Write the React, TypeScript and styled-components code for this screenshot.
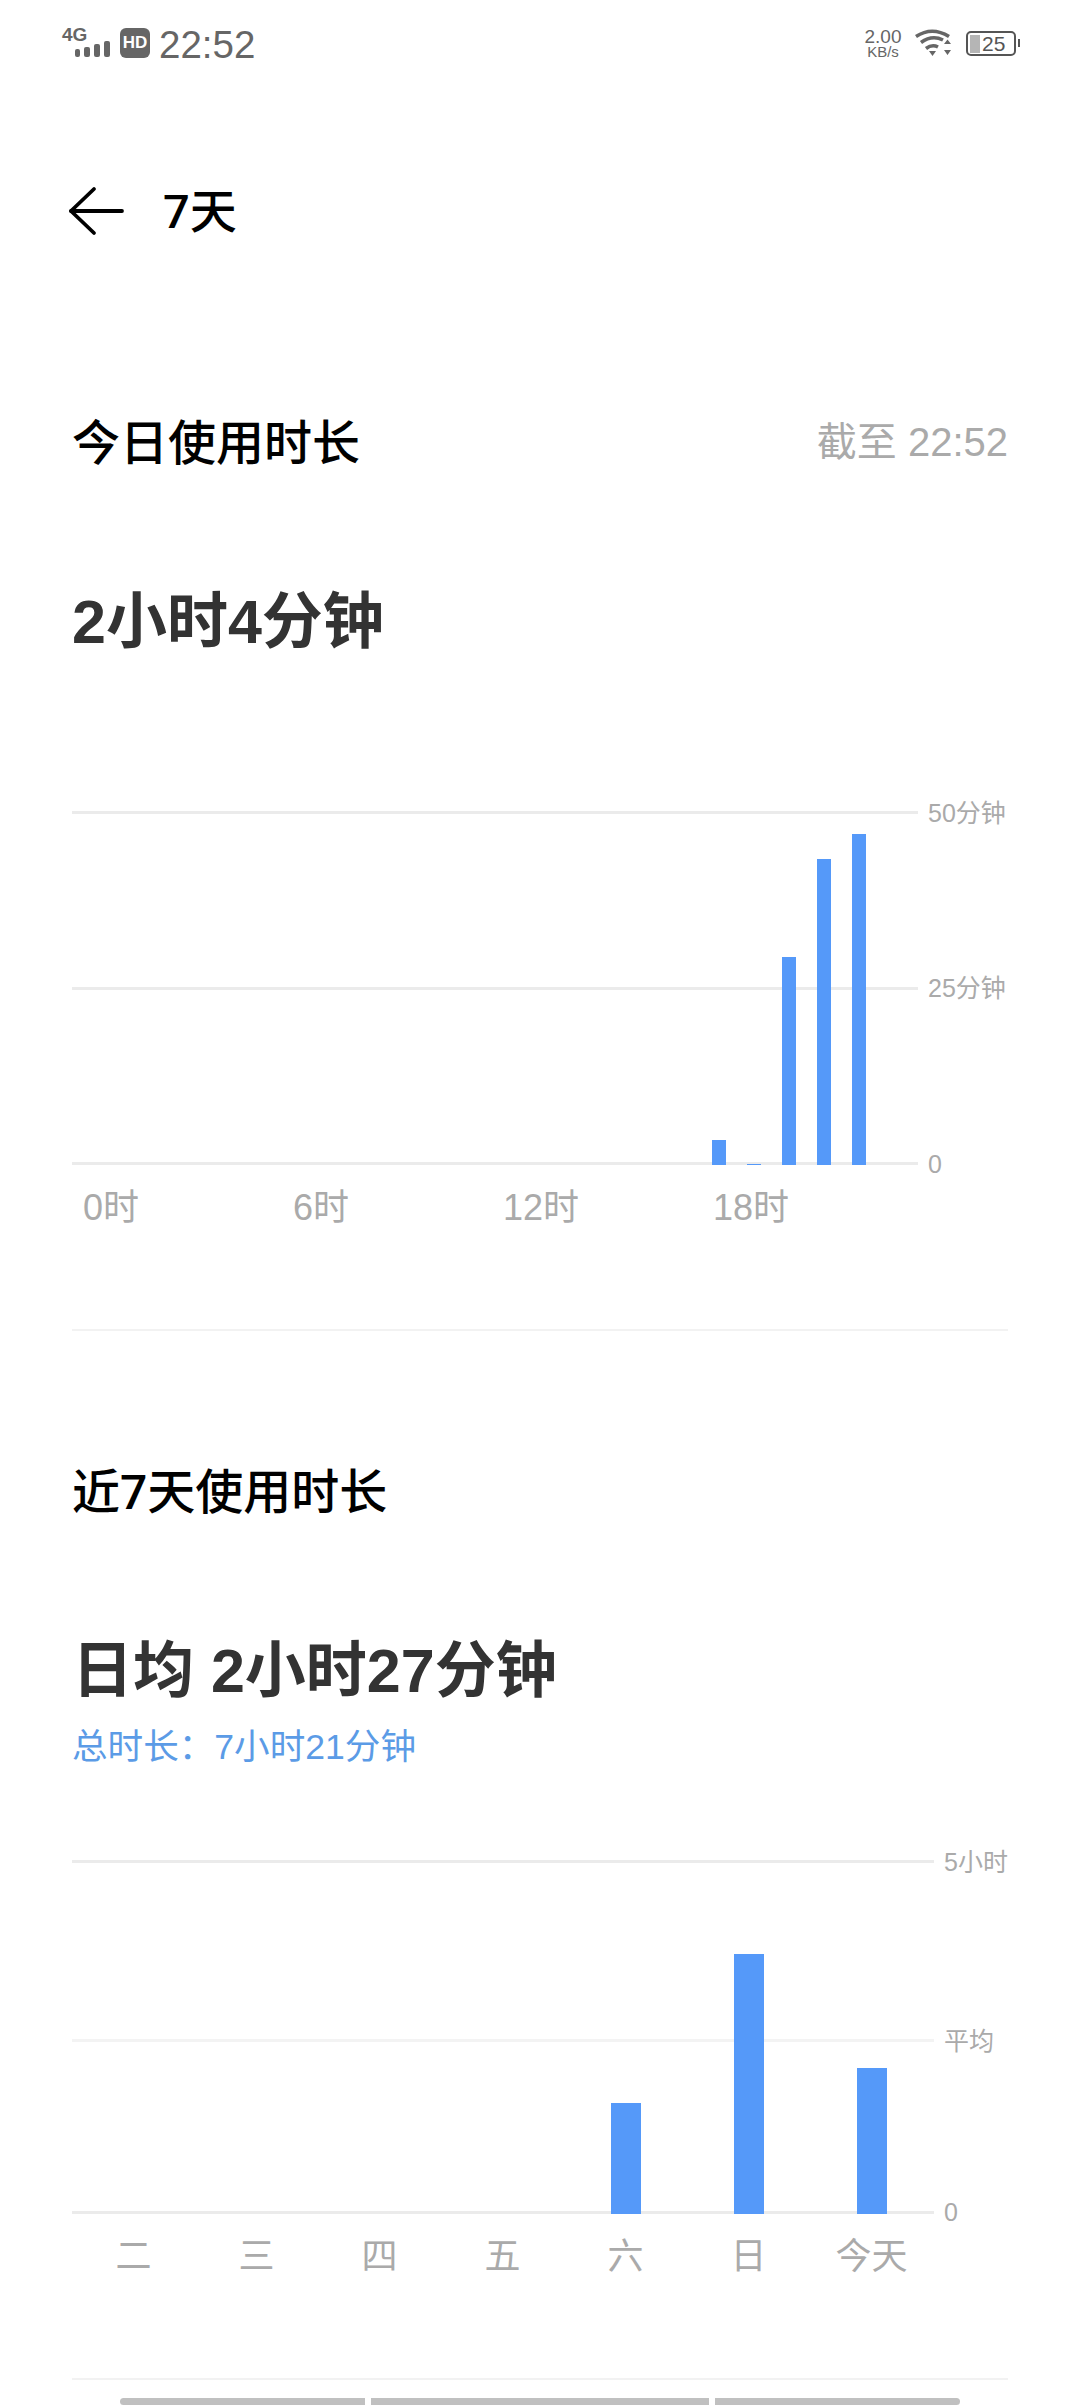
import styled, {createGlobalStyle} from "styled-components";

const GlobalStyle = createGlobalStyle`
  html, body {
    margin: 0;
    padding: 0;
    background: #fff;
  }
  body {
    font-family: "Liberation Sans", "Noto Sans CJK SC", sans-serif;
  }
`;

const Page = styled.div`
  width: 1080px;
  height: 2408px;
  overflow: hidden;
  background: #fff;
`;

const StatusBar = styled.div`
  height: 86px;
  display: flex;
  align-items: center;
  justify-content: space-between;
  padding: 0 64px 0 62px;
  color: #666;
`;

const StatusGroup = styled.div`
  display: flex;
  align-items: center;
`;

const Network = styled.div`
  width: 50px;
  height: 30px;
  display: flex;
  flex-direction: column;
  margin-right: 8px;
`;

const NetworkLabel = styled.span`
  font-size: 19px;
  line-height: 13px;
  font-weight: 700;
  height: 13px;
`;

const SignalIcon = styled.svg`
  display: block;
  margin-top: -1px;
`;

const HdBadge = styled.span`
  width: 30px;
  height: 30px;
  border-radius: 6px;
  background: #666;
  color: #fff;
  font-size: 17px;
  font-weight: 700;
  display: flex;
  align-items: center;
  justify-content: center;
  margin-right: 9px;
`;

const Clock = styled.span`
  font-size: 38.5px;
  line-height: 40px;
  margin-top: 3px;
`;

const Speed = styled.div`
  width: 40px;
  display: flex;
  flex-direction: column;
  align-items: center;
  margin-right: 11px;
`;

const SpeedValue = styled.span`
  font-size: 19px;
  line-height: 17px;
`;

const SpeedUnit = styled.span`
  font-size: 15px;
  line-height: 14px;
`;

const WifiIcon = styled.svg`
  display: block;
  margin-right: 14px;
`;

const Battery = styled.div`
  position: relative;
  width: 50px;
  height: 25px;
  box-sizing: border-box;
  border: 2px solid #555;
  border-radius: 5px;
  display: flex;
  align-items: center;
  padding-left: 2px;
  margin-top: 1px;
  &::after {
    content: "";
    position: absolute;
    right: -6px;
    top: 6px;
    width: 2px;
    height: 8px;
    background: #555;
  }
`;

const BatteryFill = styled.div`
  width: 10px;
  height: 18px;
  background: #b5b5b5;
  margin-right: 2px;
`;

const BatteryText = styled.span`
  font-size: 21px;
  line-height: 21px;
  color: #555;
`;

const Header = styled.header`
  height: 100px;
  margin-top: 74px;
  display: flex;
  align-items: center;
  padding-left: 68px;
`;

const BackIcon = styled.svg`
  display: block;
  margin: 2px 39px 0 0;
`;

const PageTitle = styled.h1`
  margin: 0 0 6px;
  font-family: Roboto, "Noto Sans CJK SC", sans-serif;
  font-size: 47px;
  font-weight: 500;
  color: #000;
`;

const Content = styled.main`
  padding: 0 72px;
`;

const SectionHead = styled.div<{$top: number}>`
  box-sizing: border-box;
  height: 80px;
  padding-bottom: 6px;
  margin-top: ${(props) => props.$top}px;
  display: flex;
  align-items: center;
  justify-content: space-between;
`;

const SectionTitle = styled.h2`
  margin: 0;
  font-family: Roboto, "Noto Sans CJK SC", sans-serif;
  font-size: 48px;
  font-weight: 500;
  color: #000;
`;

const UpdatedAt = styled.span`
  font-size: 40px;
  color: #aaa;
`;

const BigValue = styled.div`
  box-sizing: border-box;
  height: 80px;
  padding-bottom: 12px;
  margin-top: 100px;
  display: flex;
  align-items: center;
  font-size: 61px;
  font-weight: 700;
  color: #333;
`;

const TotalLine = styled.div`
  box-sizing: border-box;
  height: 50px;
  padding-bottom: 5px;
  margin-top: 10px;
  display: flex;
  align-items: center;
  font-size: 35.6px;
  color: #5b9be6;
`;

const Plot = styled.div<{$top: number}>`
  display: grid;
  height: 354px;
  margin-top: ${(props) => props.$top}px;
  & > * {
    grid-area: 1 / 1;
  }
`;

const GridLayer = styled.div`
  display: flex;
  flex-direction: column;
`;

const GridRow = styled.div`
  height: 3px;
  display: flex;
  align-items: center;
`;

const GridLine = styled.div<{$light?: boolean}>`
  flex: 1;
  height: 3px;
  background: ${(props) => (props.$light ? "#f3f3f3" : "#ebebeb")};
`;

const AxisLabel = styled.span<{$width: number}>`
  width: ${(props) => props.$width}px;
  height: 30px;
  line-height: 30px;
  margin-left: 10px;
  font-size: 25px;
  color: #aaa;
  white-space: nowrap;
  flex-shrink: 0;
`;

const BarLayer = styled.div<{$cols: number; $colWidth: number; $left: number}>`
  display: grid;
  grid-template-columns: repeat(${(props) => props.$cols}, ${(props) => props.$colWidth}px);
  padding-left: ${(props) => props.$left}px;
  align-items: end;
`;

const Bar = styled.div<{$width: number; $center?: boolean}>`
  width: ${(props) => props.$width}px;
  background: #5599f9;
  justify-self: ${(props) => (props.$center ? "center" : "start")};
`;

const XAxis = styled.div<{$cols: number; $colWidth: number; $left: number; $center?: boolean}>`
  box-sizing: border-box;
  display: grid;
  grid-template-columns: repeat(${(props) => props.$cols}, ${(props) => props.$colWidth}px);
  padding: 0 0 3px ${(props) => props.$left}px;
  height: 60px;
  margin-top: 10px;
  align-items: center;
  justify-items: ${(props) => (props.$center ? "center" : "start")};
  font-size: 36px;
  color: #aaa;
`;

const Divider = styled.div`
  height: 2px;
  margin-top: 94px;
  background: #f2f2f2;
`;

const ScrollTrack = styled.div`
  display: grid;
  grid-template-columns: 245px 338px 245px;
  column-gap: 6px;
  margin: 18px 0 0 48px;
`;

const ScrollPiece = styled.div<{$edge?: "left" | "right"}>`
  height: 7px;
  background: #c0c0c0;
  border-radius: ${(props) =>
    props.$edge === "left" ? "4px 0 0 4px" : props.$edge === "right" ? "0 4px 4px 0" : "0"};
`;

type Tick = {label: string; value: number; light?: boolean};

const PLOT_HEIGHT = 354;

const ChartGrid = ({ticks, labelWidth}: {ticks: Tick[]; labelWidth: number}) => {
  const scale = (PLOT_HEIGHT - 3) / ticks[0].value;
  return (
    <GridLayer>
      {ticks.map((t, i) => (
        <GridRow
          key={t.label}
          style={i > 0 ? {marginTop: (ticks[i - 1].value - t.value) * scale - 3} : undefined}
        >
          <GridLine $light={t.light} />
          <AxisLabel $width={labelWidth}>{t.label}</AxisLabel>
        </GridRow>
      ))}
    </GridLayer>
  );
};

// minutes per hour, 0-23
const todayMinutes = [
  0, 0, 0, 0, 0, 0, 0, 0, 0, 0, 0, 0, 0, 0, 0, 0, 0, 0, 3.5, 0.2, 29.4, 43.2, 46.8, 0,
];
const weekMinutes = [0, 0, 0, 0, 94, 220, 124];
const weekLabels = ["二", "三", "四", "五", "六", "日", "今天"];
const AVG_MINUTES = 147;

const App = () => {
  return (
    <Page>
      <GlobalStyle />
      <StatusBar>
        <StatusGroup>
          <Network>
            <NetworkLabel>4G</NetworkLabel>
            <SignalIcon width="48" height="18" viewBox="0 0 48 18" fill="#666">
              <rect x="13" y="9" width="5" height="8" rx="2" />
              <rect x="22" y="7" width="6" height="10" rx="2" />
              <rect x="32" y="4" width="6" height="13" rx="2" />
              <rect x="42" y="1" width="6" height="16" rx="2" />
            </SignalIcon>
          </Network>
          <HdBadge>HD</HdBadge>
          <Clock>22:52</Clock>
        </StatusGroup>
        <StatusGroup>
          <Speed>
            <SpeedValue>2.00</SpeedValue>
            <SpeedUnit>KB/s</SpeedUnit>
          </Speed>
          <WifiIcon width="38" height="28" viewBox="0 0 38 28" fill="none" stroke="#666" strokeWidth="3.6">
            <path d="M2 7.5 Q18 -3 35 7.5" />
            <path d="M7 13.5 Q18 5.5 29 11" />
            <path d="M12 19.5 Q18 15 24 18" />
            <path d="M15 22 L22 22 L18.5 27 Z" fill="#666" stroke="none" />
            <path d="M30 15 L37 15 L33.5 10.5 Z M30 21 L37 21 L33.5 26 Z" fill="#666" stroke="none" />
          </WifiIcon>
          <Battery>
            <BatteryFill />
            <BatteryText>25</BatteryText>
          </Battery>
        </StatusGroup>
      </StatusBar>

      <Header>
        <BackIcon width="56" height="50" viewBox="0 0 56 50" fill="none" stroke="#000" strokeWidth="3.8" strokeLinecap="round" strokeLinejoin="round">
          <path d="M26 3 L3 25 L26 47" />
          <path d="M3 25 L54 25" />
        </BackIcon>
        <PageTitle>7天</PageTitle>
      </Header>

      <Content>
        <SectionHead $top={142}>
          <SectionTitle>今日使用时长</SectionTitle>
          <UpdatedAt>截至 22:52</UpdatedAt>
        </SectionHead>
        <BigValue>2小时4分钟</BigValue>

        <Plot $top={149}>
          <ChartGrid
            labelWidth={80}
            ticks={[
              {label: "50分钟", value: 50},
              {label: "25分钟", value: 25},
              {label: "0", value: 0},
            ]}
          />
          <BarLayer $cols={24} $colWidth={35} $left={10}>
            {todayMinutes.map((m, i) => (
              <Bar key={i} $width={14} style={{height: (m / 50) * PLOT_HEIGHT}} />
            ))}
          </BarLayer>
        </Plot>
        <XAxis $cols={4} $colWidth={210} $left={11}>
          <span>0时</span>
          <span>6时</span>
          <span>12时</span>
          <span>18时</span>
        </XAxis>
        <Divider />

        <SectionHead $top={120}>
          <SectionTitle>近7天使用时长</SectionTitle>
        </SectionHead>
        <BigValue>日均 2小时27分钟</BigValue>
        <TotalLine>总时长：7小时21分钟</TotalLine>

        <Plot $top={89}>
          <ChartGrid
            labelWidth={64}
            ticks={[
              {label: "5小时", value: 300},
              {label: "平均", value: AVG_MINUTES, light: true},
              {label: "0", value: 0},
            ]}
          />
          <BarLayer $cols={7} $colWidth={123} $left={0}>
            {weekMinutes.map((m, i) => (
              <Bar key={i} $center $width={30} style={{height: (m / 300) * PLOT_HEIGHT}} />
            ))}
          </BarLayer>
        </Plot>
        <XAxis $center $cols={7} $colWidth={123} $left={0}>
          {weekLabels.map((d) => (
            <span key={d}>{d}</span>
          ))}
        </XAxis>
        <Divider />
        <ScrollTrack>
          <ScrollPiece $edge="left" />
          <ScrollPiece />
          <ScrollPiece $edge="right" />
        </ScrollTrack>
      </Content>
    </Page>
  );
};

export default App;
